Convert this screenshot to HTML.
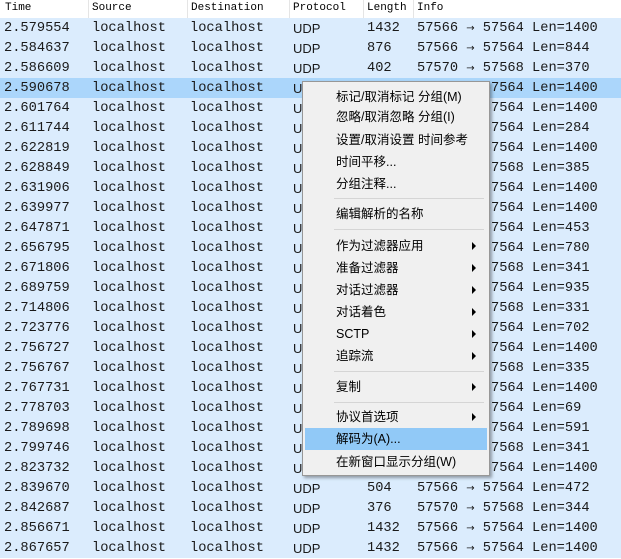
<!DOCTYPE html>
<html><head><meta charset="utf-8"><style>
body{margin:0;width:621px;height:557px;overflow:hidden;background:#fff;position:relative;font-family:"Liberation Mono",monospace}
.hd{position:absolute;top:0;left:0;width:621px;height:18px;background:#fff;border-bottom:1px solid #e5e5e5;font-size:11px;color:#000}
.hd span{position:absolute;top:2px}
.hd i{position:absolute;top:0;width:1px;height:18px;background:#e5e5e5}
.r{position:absolute;left:0;width:621px;height:20px;background:#dbecfd;font-size:13.7px;color:#1a1a1a;line-height:21px}
.r.s{background:#abd6fb}
.r span{position:absolute;top:0;white-space:pre}
.r b{display:inline-block;width:8.25px;font-weight:normal;font-size:10px;font-family:"DejaVu Sans",sans-serif;text-align:center;vertical-align:top}
.u{font-family:"Liberation Sans",sans-serif;font-size:13px}
.m{position:absolute;left:302px;top:81px;width:186px;height:393px;background:#f0f0f0;border:1px solid #979797;box-shadow:2px 2px 3px rgba(0,0,0,.35);font-family:"Liberation Sans","Noto Sans CJK SC",sans-serif;font-size:12.5px;color:#000}
.it{position:absolute;left:33px;height:22px;line-height:22px;white-space:nowrap}
.ar{position:absolute;left:169px;width:0;height:0;border-left:4px solid #000;border-top:4px solid transparent;border-bottom:4px solid transparent}
.sp{position:absolute;left:31px;width:150px;height:1px;background:#d5d5d5}
.hl{position:absolute;left:2px;top:346px;width:182px;height:22px;background:#91c9f7}
</style></head><body>
<div class="hd"><span style="left:5px">Time</span><i style="left:88px"></i><span style="left:92px">Source</span><i style="left:187px"></i><span style="left:191px">Destination</span><i style="left:289px"></i><span style="left:293px">Protocol</span><i style="left:363px"></i><span style="left:367px">Length</span><i style="left:413px"></i><span style="left:417px">Info</span></div>
<div id="rows"></div>
<script>
var d=[["2.579554","1432","57566","57564","1400"],["2.584637","876","57566","57564","844"],["2.586609","402","57570","57568","370"],["2.590678","1432","57566","57564","1400"],["2.601764","1432","57566","57564","1400"],["2.611744","316","57566","57564","284"],["2.622819","1432","57566","57564","1400"],["2.628849","417","57570","57568","385"],["2.631906","1432","57566","57564","1400"],["2.639977","1432","57566","57564","1400"],["2.647871","485","57566","57564","453"],["2.656795","812","57566","57564","780"],["2.671806","373","57570","57568","341"],["2.689759","967","57566","57564","935"],["2.714806","363","57570","57568","331"],["2.723776","734","57566","57564","702"],["2.756727","1432","57566","57564","1400"],["2.756767","367","57570","57568","335"],["2.767731","1432","57566","57564","1400"],["2.778703","101","57566","57564","69"],["2.789698","623","57566","57564","591"],["2.799746","373","57570","57568","341"],["2.823732","1432","57566","57564","1400"],["2.839670","504","57566","57564","472"],["2.842687","376","57570","57568","344"],["2.856671","1432","57566","57564","1400"],["2.867657","1432","57566","57564","1400"]];
var h="";d.forEach(function(r,i){h+='<div class="r'+(i==3?' s':'')+'" style="top:'+(18+i*20)+'px"><span style="left:4px">'+r[0]+'</span><span style="left:92px">localhost</span><span style="left:190px">localhost</span><span class="u" style="left:293px">UDP</span><span style="left:367px">'+r[1]+'</span><span style="left:417px">'+r[2]+' <b>\u2192</b> '+r[3]+' Len='+r[4]+'</span></div>'});
document.getElementById("rows").innerHTML=h;
</script>
<div class="m">
<div class="hl"></div>
<div class="it" style="top:4px">标记/取消标记 分组(M)</div>
<div class="it" style="top:24px">忽略/取消忽略 分组(I)</div>
<div class="it" style="top:47px">设置/取消设置 时间参考</div>
<div class="it" style="top:69px">时间平移...</div>
<div class="it" style="top:91px">分组注释...</div>
<div class="sp" style="top:116px"></div>
<div class="it" style="top:121px">编辑解析的名称</div>
<div class="sp" style="top:147px"></div>
<div class="it" style="top:153px">作为过滤器应用</div><div class="ar" style="top:160px"></div>
<div class="it" style="top:175px">准备过滤器</div><div class="ar" style="top:182px"></div>
<div class="it" style="top:197px">对话过滤器</div><div class="ar" style="top:204px"></div>
<div class="it" style="top:219px">对话着色</div><div class="ar" style="top:226px"></div>
<div class="it" style="top:241px">SCTP</div><div class="ar" style="top:248px"></div>
<div class="it" style="top:263px">追踪流</div><div class="ar" style="top:270px"></div>
<div class="sp" style="top:289px"></div>
<div class="it" style="top:294px">复制</div><div class="ar" style="top:301px"></div>
<div class="sp" style="top:320px"></div>
<div class="it" style="top:324px">协议首选项</div><div class="ar" style="top:331px"></div>
<div class="it" style="top:346px">解码为(A)...</div>
<div class="it" style="top:369px">在新窗口显示分组(W)</div>
</div>
</body></html>
